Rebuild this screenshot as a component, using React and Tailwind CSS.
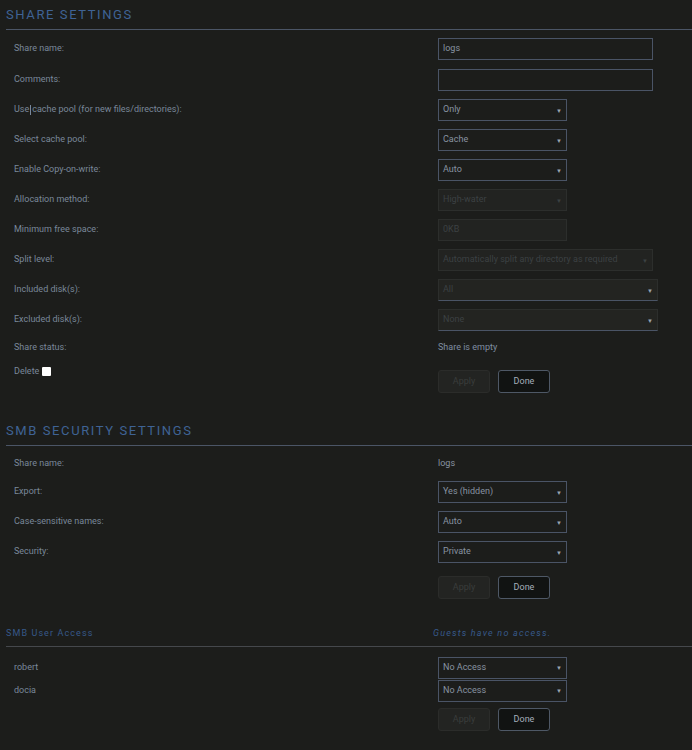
import React from 'react';

const FONT = { fontFamily: 'Roboto, "Open Sans", sans-serif' };

function Heading({ children }) {
  return (
    <div className="pl-[6px] pt-[5px]">
      <div className="h-[18px] flex items-center text-[13px] tracking-[1.6px] text-[#3f6395] leading-none">
        {children}
      </div>
      <div className="mt-[6px] h-px bg-[#4b5566]" />
    </div>
  );
}

function Row({ label, children, h = 'h-[30px]' }) {
  return (
    <div className={`flex items-center ${h}`}>
      <div className="w-[438px] pl-[14px] text-[9px] text-[#7a889a]">{label}</div>
      <div className="flex items-center">{children}</div>
    </div>
  );
}

function TextInput({ value, w = 'w-[215px]' }) {
  return (
    <div className={`${w} h-[22px] border border-[#4a5466] flex items-center px-[4px] text-[9px] text-[#8893a1]`}>
      {value}
    </div>
  );
}

function Select({ value, w = 'w-[129px]', disabled, wide }) {
  return (
    <div
      className={`${w} h-[22px] flex items-center justify-between px-[4px] text-[9px] border ${
        disabled
          ? 'border-[#2c2e2c] bg-[#222321] text-[#3c4143]'
          : wide
          ? 'border-[#2c2e2c] border-b-[#4a5466] bg-[#232421] text-[#3c4143]'
          : 'border-[#4a5466] text-[#8893a1]'
      }`}
    >
      <span>{value}</span>
      <span className={`text-[6px] ${disabled ? 'text-[#3c4143]' : 'text-[#9aa4b0]'}`}>▼</span>
    </div>
  );
}

function Buttons() {
  return (
    <div className="flex gap-[8px]">
      <div className="w-[52px] h-[23px] rounded-[3px] border border-[#2b2c2a] bg-[#232422] flex items-center justify-center text-[9px] text-[#3a3d3c]">
        Apply
      </div>
      <div className="w-[52px] h-[23px] rounded-[3px] border border-[#4e5866] bg-[#111312] flex items-center justify-center text-[9px] text-[#a4aebb]">
        Done
      </div>
    </div>
  );
}

export default function App() {
  return (
    <div className="w-[692px] h-[750px] bg-[#1c1d1b] overflow-hidden" style={FONT}>
      <Heading>SHARE SETTINGS</Heading>

      <div className="pt-[3px]">
        <Row label="Share name:" h="h-[31px]"><TextInput value="logs" /></Row>
        <Row label="Comments:" h="h-[31px]"><TextInput value="" /></Row>
        <Row label={<span>Use<span className="inline-block w-px h-[10px] bg-[#7a889a] align-middle mx-[1px]" />cache pool (for new files/directories):</span>}>
          <Select value="Only" />
        </Row>
        <Row label="Select cache pool:"><Select value="Cache" /></Row>
        <Row label="Enable Copy-on-write:"><Select value="Auto" /></Row>
        <Row label="Allocation method:"><Select value="High-water" disabled /></Row>
        <Row label="Minimum free space:">
          <div className="w-[129px] h-[22px] border border-[#2c2e2c] bg-[#222321] flex items-center px-[4px] text-[9px] text-[#3c4143]">0KB</div>
        </Row>
        <Row label="Split level:"><Select value="Automatically split any directory as required" w="w-[215px]" disabled /></Row>
        <Row label="Included disk(s):"><Select value="All" w="w-[220px]" wide /></Row>
        <Row label="Excluded disk(s):"><Select value="None" w="w-[220px]" wide /></Row>
        <Row label="Share status:" h="h-[25px]">
          <span className="text-[9px] text-[#7f8ea1]">Share is empty</span>
        </Row>
        <div className="flex items-start pt-[10px]">
          <div className="w-[438px] pl-[14px] -mt-[5px] text-[9px] text-[#7a889a] flex items-center">
            Delete
            <span className="ml-[3px] inline-block w-[9px] h-[9px] bg-white rounded-[1px]" />
          </div>
          <Buttons />
        </div>
      </div>

      <div className="mt-[23px]">
        <Heading>SMB SECURITY SETTINGS</Heading>
      </div>
      <div className="pt-[4px]">
        <Row label="Share name:" h="h-[27px]">
          <span className="text-[9px] text-[#8893a1]">logs</span>
        </Row>
        <Row label="Export:"><Select value="Yes (hidden)" /></Row>
        <Row label="Case-sensitive names:"><Select value="Auto" /></Row>
        <Row label="Security:"><Select value="Private" /></Row>
        <div className="flex pt-[9px]">
          <div className="w-[438px]" />
          <Buttons />
        </div>
      </div>

      <div className="mt-[28px] pl-[6px]">
        <div className="flex items-center h-[14px]">
          <div className="w-[427px] text-[9px] tracking-[1.1px] text-[#37598a]">SMB User Access</div>
          <div className="text-[9px] italic tracking-[1.2px] text-[#37598a]">Guests have no access.</div>
        </div>
        <div className="mt-[5px] h-px bg-[#45484c]" />
      </div>
      <div className="pt-[9px]">
        <Row label="robert" h="h-[23px]"><Select value="No Access" /></Row>
        <Row label="docia" h="h-[23px]"><Select value="No Access" /></Row>
        <div className="flex pt-[6px]">
          <div className="w-[438px]" />
          <Buttons />
        </div>
      </div>
    </div>
  );
}
